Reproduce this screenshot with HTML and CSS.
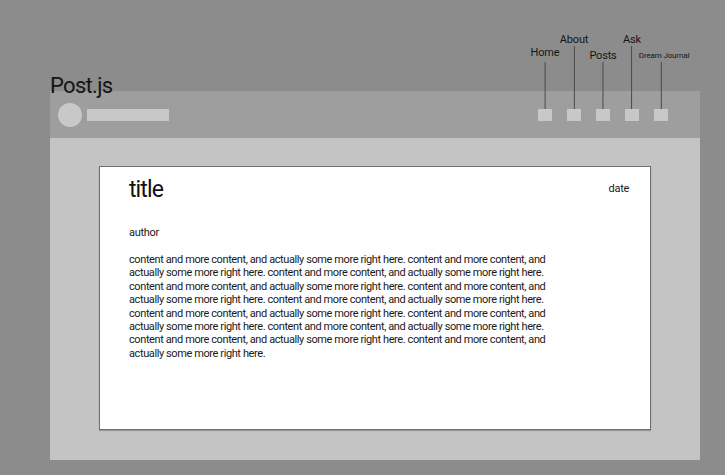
FILE: index.html
```html
<!DOCTYPE html>
<html lang="en">
<head>
<meta charset="utf-8">
<title>Post.js</title>
<link rel="stylesheet" href="styles.css">
</head>
<body>
<div class="page">
  <div class="masthead"><h1 class="file-name">Post.js</h1></div>
  <div class="frame">
    <header class="site-header">
      <div class="brand"><span class="logo"></span><span class="brand-bar"></span></div>
      <nav class="nav">
        <span class="nav-item"><span class="callout callout--short"><span class="callout-label callout-label--raised">Home</span><span class="callout-line"></span></span></span>
        <span class="nav-item"><span class="callout callout--tall"><span class="callout-label">About</span><span class="callout-line"></span></span></span>
        <span class="nav-item"><span class="callout callout--short"><span class="callout-label">Posts</span><span class="callout-line"></span></span></span>
        <span class="nav-item"><span class="callout callout--tall"><span class="callout-label">Ask</span><span class="callout-line"></span></span></span>
        <span class="nav-item"><span class="callout callout--short"><span class="callout-label callout-label--small">Dream Journal</span><span class="callout-line"></span></span></span>
      </nav>
    </header>
    <main class="content-area">
      <article class="card">
        <div class="card-head">
          <h2 class="post-title">title</h2>
          <span class="post-date">date</span>
        </div>
        <p class="post-author">author</p>
        <p class="post-body">content and more content, and actually some more right here. content and more content, and actually some more right here. content and more content, and actually some more right here. content and more content, and actually some more right here. content and more content, and actually some more right here. content and more content, and actually some more right here. content and more content, and actually some more right here. content and more content, and actually some more right here. content and more content, and actually some more right here. content and more content, and actually some more right here. content and more content, and actually some more right here.</p>
      </article>
    </main>
  </div>
</div>
</body>
</html>
```
FILE: styles.css
```css
* { box-sizing: border-box; }

html, body {
  margin: 0;
  padding: 0;
}

body {
  background: #8c8c8c;
  font-family: Roboto, "Liberation Sans", sans-serif;
  color: #1a1a1a;
  width: 725px;
  height: 475px;
  overflow: hidden;
}

.masthead {
  height: 91px;
  padding: 75px 0 0 50px;
}

.file-name {
  margin: 0;
  font-size: 22px;
  line-height: 22px;
  font-weight: 400;
  letter-spacing: -0.7px;
  color: #151515;
}

.frame {
  margin-left: 50px;
  width: 650px;
}

.site-header {
  height: 47px;
  background: #9e9e9e;
  display: flex;
  align-items: center;
  justify-content: space-between;
  padding: 0 32px 0 8px;
}

.brand {
  display: flex;
  align-items: center;
  gap: 5px;
}

.logo {
  width: 24px;
  height: 24px;
  border-radius: 50%;
  background: #c8c8c8;
}

.brand-bar {
  width: 82px;
  height: 12px;
  background: #c8c8c8;
}

.nav {
  display: flex;
  gap: 15px;
  align-items: center;
}

.nav-item {
  position: relative;
  width: 14px;
  height: 12px;
  background: #c8c8c8;
}

.callout {
  position: absolute;
  bottom: 100%;
  left: 50%;
  transform: translateX(-50%);
  display: flex;
  flex-direction: column;
  align-items: center;
}

.callout-label {
  font-size: 11px;
  line-height: 12px;
  white-space: nowrap;
  letter-spacing: -0.2px;
  color: #161616;
}

.callout-label--raised {
  margin-bottom: 3px;
}

.callout-label--small {
  font-size: 8px;
  line-height: 10px;
  letter-spacing: -0.15px;
  transform: translateX(3px);
  margin-bottom: 1px;
}

.callout-line {
  width: 1px;
  background: #4a4a4a;
}

.callout--short .callout-line { height: 47px; }
.callout--tall .callout-line { height: 63px; }

.content-area {
  background: #c4c4c4;
  padding: 28px 49px 30px;
}

.card {
  height: 264px;
  background: #ffffff;
  border: 1px solid #6e6e6e;
  box-shadow: 0 1px 1px rgba(0, 0, 0, 0.22);
  padding: 9px 21px 0 29px;
}

.card-head {
  display: flex;
  justify-content: space-between;
  align-items: flex-start;
}

.post-title {
  margin: 0;
  font-size: 23px;
  line-height: 27px;
  font-weight: 400;
  letter-spacing: -0.9px;
  color: #111;
}

.post-date {
  margin-top: 6px;
  font-size: 11px;
  line-height: 13px;
  letter-spacing: -0.3px;
}

.post-author {
  margin: 23px 0 0;
  font-size: 11px;
  line-height: 13px;
  letter-spacing: -0.3px;
}

.post-body {
  margin: 14px 0 0;
  width: 430px;
  font-size: 11px;
  line-height: 13.4px;
  letter-spacing: -0.4px;
}
```
